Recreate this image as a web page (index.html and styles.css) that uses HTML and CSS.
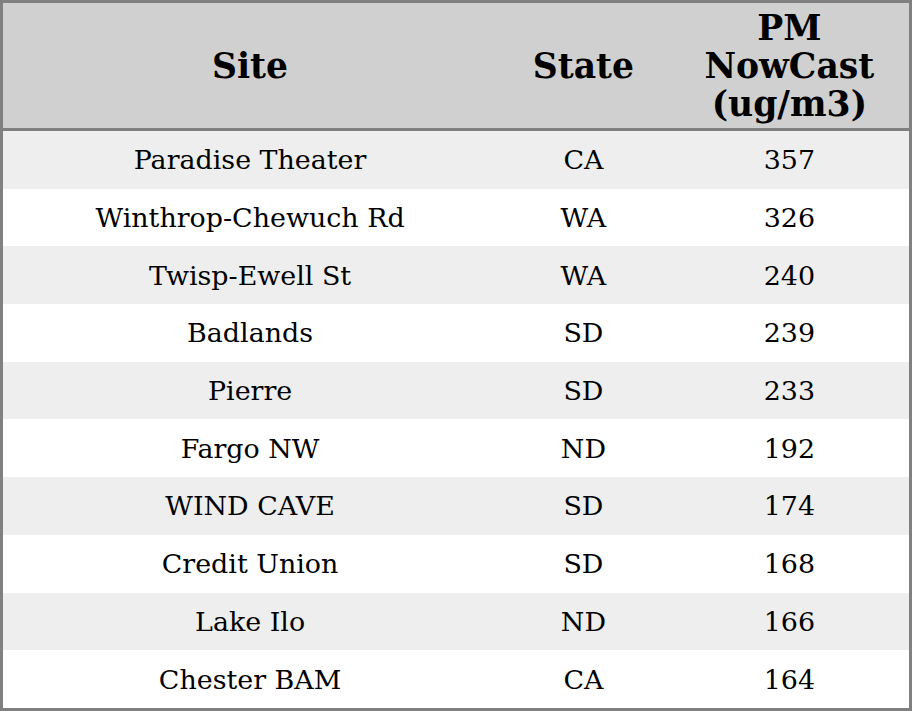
FILE: index.html
```html
<!DOCTYPE html>
<html>
<head>
<meta charset="utf-8">
<link rel="stylesheet" href="styles.css">
</head>
<body>
<table class="aq">
  <colgroup>
    <col class="c1"><col class="c2"><col class="c3">
  </colgroup>
  <thead>
    <tr><th>Site</th><th>State</th><th>PM<br>NowCast<br>(ug/m3)</th></tr>
  </thead>
  <tbody>
    <tr><td>Paradise Theater</td><td>CA</td><td>357</td></tr>
    <tr><td>Winthrop-Chewuch Rd</td><td>WA</td><td>326</td></tr>
    <tr><td>Twisp-Ewell St</td><td>WA</td><td>240</td></tr>
    <tr><td>Badlands</td><td>SD</td><td>239</td></tr>
    <tr><td>Pierre</td><td>SD</td><td>233</td></tr>
    <tr><td>Fargo NW</td><td>ND</td><td>192</td></tr>
    <tr><td>WIND CAVE</td><td>SD</td><td>174</td></tr>
    <tr><td>Credit Union</td><td>SD</td><td>168</td></tr>
    <tr><td>Lake Ilo</td><td>ND</td><td>166</td></tr>
    <tr><td>Chester BAM</td><td>CA</td><td>164</td></tr>
  </tbody>
</table>
</body>
</html>
```
FILE: styles.css
```css
html, body {
  margin: 0;
  padding: 0;
  background: #ffffff;
}
.aq {
  width: 912px;
  height: 711px;
  border-collapse: collapse;
  border: 3px solid #808080;
  font-family: "DejaVu Serif", serif;
  color: #000;
  table-layout: fixed;
}
.c1 { width: 494px; }
.c2 { width: 172px; }
.c3 { width: 240px; }
.aq th {
  background: #d0d0d0;
  font-size: 34.6px;
  font-weight: bold;
  line-height: 38px;
  height: 128px;
  padding: 0;
  text-align: center;
  vertical-align: middle;
  border-bottom: 3px solid #808080;
  box-sizing: border-box;
}
.aq td {
  font-size: 26.9px;
  text-align: center;
  vertical-align: middle;
  padding: 0;
  height: 57.7px;
}
.aq tbody tr:nth-child(odd) td {
  background: #eeeeee;
}
```
